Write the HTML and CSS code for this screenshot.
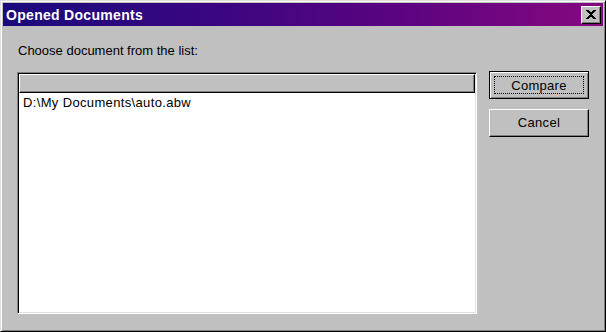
FILE: index.html
```html
<!DOCTYPE html>
<html>
<head>
<meta charset="utf-8">
<link rel="stylesheet" href="styles.css">
</head>
<body>
<div class="window">
  <div class="titlebar">
    <span class="title">Opened Documents</span>
    <div class="close">
      <svg width="10" height="9" viewBox="0 0 10 9" shape-rendering="crispEdges">
        <path d="M0 0h3v1h1v1h2v-1h1v-1h3v1h-1v1h-1v1h-1v1h-1v1h1v1h1v1h1v1h1v1h-3v-1h-1v-1h-2v1h-1v1h-3v-1h1v-1h1v-1h1v-1h1v-1h-1v-1h-1v-1h-1v-1h-1z" fill="#000"/>
      </svg>
    </div>
  </div>
  <div class="content">
    <div class="label">Choose document from the list:</div>
    <div class="row">
      <div class="listbox">
        <div class="header"></div>
        <div class="items">
          <div class="item">D:\My Documents\auto.abw</div>
        </div>
      </div>
      <div class="buttons">
        <div class="btn default"><span class="focus">Compare</span></div>
        <div class="btn"><span>Cancel</span></div>
      </div>
    </div>
  </div>
</div>
</body>
</html>
```

FILE: styles.css
```css
html, body {
  margin: 0;
  padding: 0;
  background: #c0c0c0;
}
body {
  font-family: "Liberation Sans", Arial, sans-serif;
  font-size: 13px;
  color: #000;
}
.window {
  width: 606px;
  height: 332px;
  box-sizing: border-box;
  background: #c0c0c0;
  border-top: 1px solid #dfdfdf;
  border-left: 1px solid #dfdfdf;
  border-right: 1px solid #000;
  border-bottom: 1px solid #000;
  box-shadow: inset 1px 1px 0 #fff, inset -1px -1px 0 #808080;
  padding: 2px;
  display: flex;
  flex-direction: column;
}
.window > * {
  flex: none;
}
.titlebar {
  height: 23px;
  background: linear-gradient(to right, #1a0a7c 0%, #3a0680 35%, #600480 70%, #86087f 100%);
  display: flex;
  align-items: center;
  justify-content: space-between;
  padding: 0 2px 0 3px;
}
.title {
  color: #fff;
  font-weight: bold;
  font-size: 14px;
  letter-spacing: 0.3px;
}
.close {
  width: 20px;
  height: 18px;
  box-sizing: border-box;
  background: #c0c0c0;
  border-top: 1px solid #fff;
  border-left: 1px solid #fff;
  border-right: 1px solid #000;
  border-bottom: 1px solid #000;
  box-shadow: inset -1px -1px 0 #808080;
  display: flex;
  align-items: center;
  justify-content: center;
}
.close svg {
  margin: 0 1px 1px 0;
}
.content {
  padding: 17px 0 0 14px;
}
.label {
  line-height: 16px;
  height: 16px;
  padding-left: 1px;
  margin-bottom: 12px;
}
.row {
  display: flex;
  align-items: flex-start;
  gap: 12px;
}
.listbox {
  width: 460px;
  height: 242px;
  margin-top: 1px;
  box-sizing: border-box;
  background: #fff;
  border-top: 1px solid #808080;
  border-left: 1px solid #808080;
  border-right: 1px solid #fff;
  border-bottom: 1px solid #fff;
  box-shadow: inset 1px 1px 0 #000, inset -1px -1px 0 #dfdfdf;
  padding: 1px;
  display: flex;
  flex-direction: column;
}
.header {
  height: 19px;
  box-sizing: border-box;
  background: #c0c0c0;
  border-top: 1px solid #fff;
  border-left: 1px solid #fff;
  border-right: 1px solid #000;
  border-bottom: 1px solid #000;
  box-shadow: inset -1px -1px 0 #808080;
}
.items {
  flex: 1;
  padding-top: 2px;
}
.item {
  line-height: 16px;
  padding-left: 4px;
  letter-spacing: 0.35px;
}
.buttons {
  display: flex;
  flex-direction: column;
  gap: 10px;
}
.btn {
  width: 100px;
  height: 28px;
  box-sizing: border-box;
  background: #c0c0c0;
  border-top: 1px solid #fff;
  border-left: 1px solid #fff;
  border-right: 1px solid #000;
  border-bottom: 1px solid #000;
  box-shadow: inset -1px -1px 0 #808080;
  display: flex;
  align-items: center;
  justify-content: center;
  padding-bottom: 1px;
  letter-spacing: 0.3px;
}
.btn.default {
  border: 1px solid #000;
  box-shadow: inset 1px 1px 0 #fff, inset -1px -1px 0 #808080, inset -2px -2px 0 #c0c0c0;
  padding: 3px;
  justify-content: stretch;
  align-items: stretch;
}
.focus {
  flex: 1;
  display: flex;
  align-items: center;
  justify-content: center;
  border: 1px dotted #000;
  margin: 1px;
}
```
